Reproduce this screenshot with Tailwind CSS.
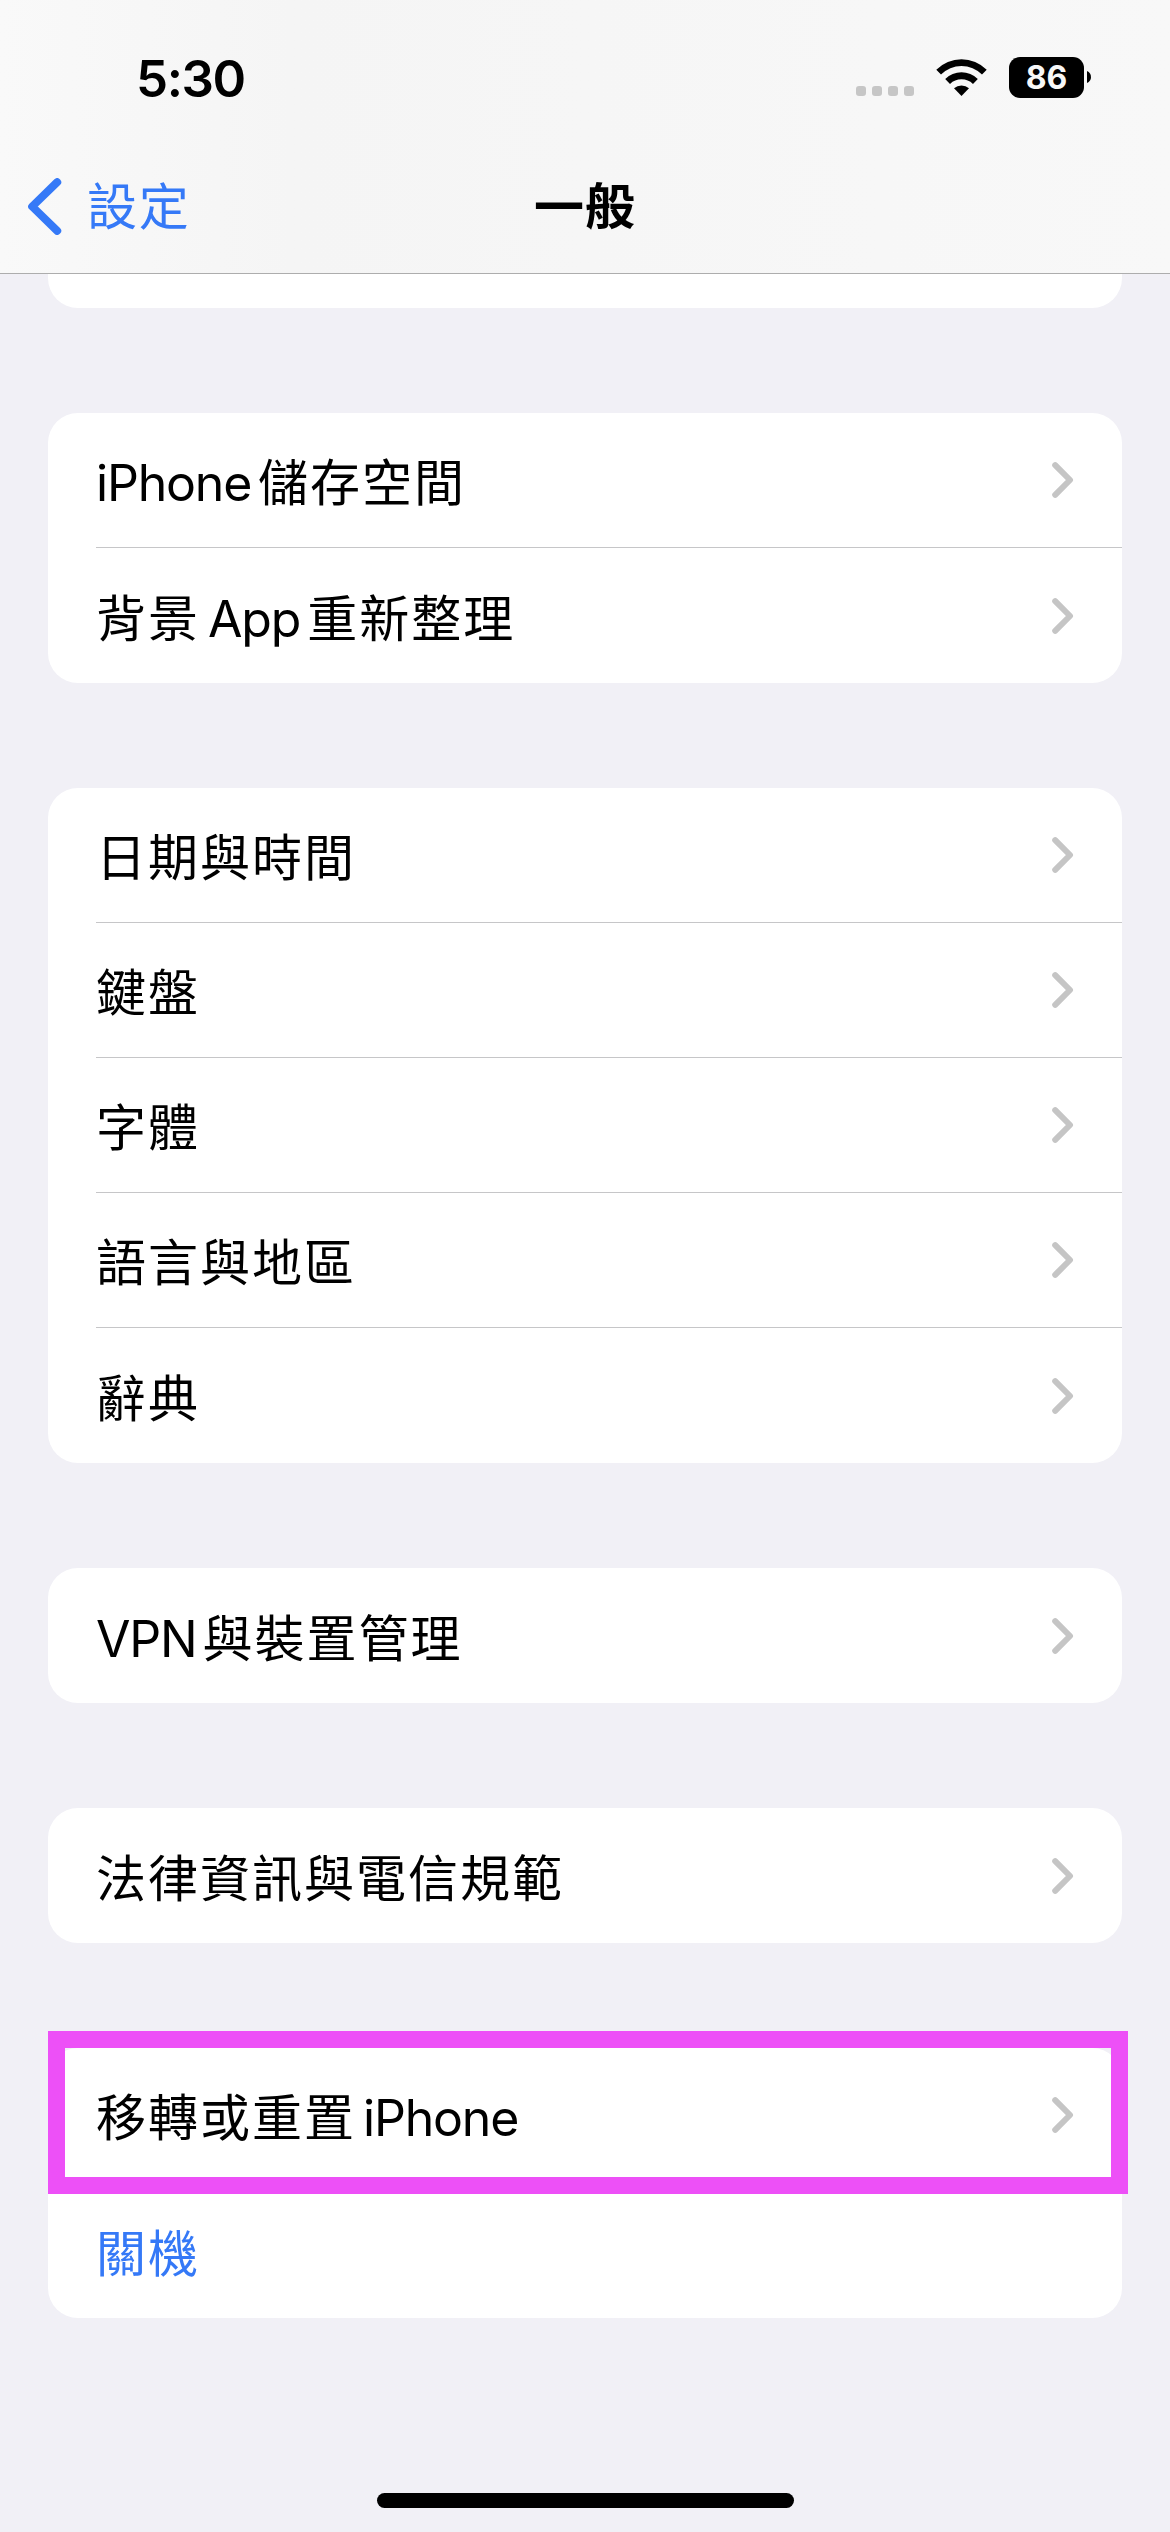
<!DOCTYPE html>
<html lang="zh-Hant">
<head>
  <meta charset="UTF-8" />
  <meta name="viewport" content="width=device-width, initial-scale=1" />
  <title>一般</title>
  <script src="https://cdn.jsdelivr.net/npm/@tailwindcss/browser@4"></script>
</head>
<body class="bg-[#f1f0f6] text-black w-[1170px] h-[2532px] overflow-hidden flex flex-col font-['Inter','Noto_Sans_CJK_TC',sans-serif]">

<!-- ICONS -->
<svg class="hidden">
  <symbol id="chevron" viewBox="0 0 22 36">
    <path d="M3.2 3.2 18 18 3.2 32.8" fill="none" stroke="#c5c5c5" stroke-width="6" stroke-linecap="round" stroke-linejoin="round"/>
  </symbol>
</svg>

<!-- HEADER -->
<header class="h-[274px] shrink-0 border-b border-[#adadad] bg-linear-to-r from-[#f9f9f9] via-[#f5f5f5] via-25% to-[#f8f8f8] flex flex-col">

  <!-- STATUS BAR -->
  <div class="h-[156px] flex items-start justify-between pl-[136px] pr-[79px]">
    <span class="mt-[48px] text-[51px] leading-[62px] font-semibold tracking-[-1.4px]">5:30</span>
    <div class="mt-[57px] flex items-start">
      <div class="mt-[29px] flex gap-[6px]">
        <i class="size-[10px] rounded-[3px] bg-[#c6c6c6]"></i>
        <i class="size-[10px] rounded-[3px] bg-[#c6c6c6]"></i>
        <i class="size-[10px] rounded-[3px] bg-[#c6c6c6]"></i>
        <i class="size-[10px] rounded-[3px] bg-[#c6c6c6]"></i>
      </div>
      <svg class="ml-[22px] mt-[2px] w-[51px] h-[37px]" viewBox="0 0 51 37">
        <path d="M0.3 10.8A35.5 35.5 0 0 1 50.7 10.8L46 15.6A29 29 0 0 0 5 15.6Z"/>
        <path d="M9.2 20A23.2 23.2 0 0 1 41.8 20L37 24.9A16.6 16.6 0 0 0 14 24.9Z"/>
        <path d="M18 29.2A11.5 11.5 0 0 1 33 29.2L25.5 37Z"/>
      </svg>
      <div class="ml-[22px] w-[75px] h-[41px] rounded-[11px] bg-black text-[#f7f7f7] flex items-center justify-center text-[32px] leading-[41px] font-bold">86</div>
      <svg class="ml-[3px] mt-[14px] w-[4px] h-[12px]" viewBox="0 0 4 12"><path d="M0 0C5.3 1.8 5.3 10.2 0 12Z"/></svg>
    </div>
  </div>

  <!-- NAV BAR -->
  <nav class="flex-1 grid grid-cols-3">
    <a class="flex items-start pl-[28px] text-[#3579f7]">
      <svg class="mt-[22px] w-[34px] h-[57px]" viewBox="0 0 34 57">
        <path d="M29.2 4.2 4.2 28.5 29.2 52.8" fill="none" stroke="currentColor" stroke-width="8" stroke-linecap="round" stroke-linejoin="round"/>
      </svg>
      <span class="ml-[25px] mt-[15px] text-[50px] leading-[72px] tracking-[1.7px]">設定</span>
    </a>
    <h1 class="mt-[15px] text-center text-[50px] leading-[72px] font-bold tracking-[1px]">一般</h1>
  </nav>
</header>

<!-- SETTINGS LIST -->
<main class="flex-1 px-[48px] flex flex-col gap-[105px] text-[50px] leading-[72px] tracking-[2px]">

  <section class="h-[34px] shrink-0 bg-white rounded-b-[30px]"></section>

  <section class="bg-white rounded-[30px] pl-[48px]">
    <div class="h-[135px] border-b border-[#c6c6c8] flex items-center justify-between pr-[48px]">
      <span class="pt-[6px]"><span class="tracking-[-1.2px] mr-[7px]">iPhone</span>儲存空間</span>
      <svg class="w-[22px] h-[36px]"><use href="#chevron"/></svg>
    </div>
    <div class="h-[135px] flex items-center justify-between pr-[48px]">
      <span class="pt-[6px]">背景<span class="tracking-[-1.2px] ml-[8px] mr-[7px]">App</span>重新整理</span>
      <svg class="w-[22px] h-[36px]"><use href="#chevron"/></svg>
    </div>
  </section>

  <section class="bg-white rounded-[30px] pl-[48px]">
    <div class="h-[135px] border-b border-[#c6c6c8] flex items-center justify-between pr-[48px]">
      <span class="pt-[6px]">日期與時間</span>
      <svg class="w-[22px] h-[36px]"><use href="#chevron"/></svg>
    </div>
    <div class="h-[135px] border-b border-[#c6c6c8] flex items-center justify-between pr-[48px]">
      <span class="pt-[6px]">鍵盤</span>
      <svg class="w-[22px] h-[36px]"><use href="#chevron"/></svg>
    </div>
    <div class="h-[135px] border-b border-[#c6c6c8] flex items-center justify-between pr-[48px]">
      <span class="pt-[6px]">字體</span>
      <svg class="w-[22px] h-[36px]"><use href="#chevron"/></svg>
    </div>
    <div class="h-[135px] border-b border-[#c6c6c8] flex items-center justify-between pr-[48px]">
      <span class="pt-[6px]">語言與地區</span>
      <svg class="w-[22px] h-[36px]"><use href="#chevron"/></svg>
    </div>
    <div class="h-[135px] flex items-center justify-between pr-[48px]">
      <span class="pt-[6px]">辭典</span>
      <svg class="w-[22px] h-[36px]"><use href="#chevron"/></svg>
    </div>
  </section>

  <section class="bg-white rounded-[30px] pl-[48px]">
    <div class="h-[135px] flex items-center justify-between pr-[48px]">
      <span class="pt-[6px]"><span class="tracking-[-1.2px] mr-[6px]">VPN</span>與裝置管理</span>
      <svg class="w-[22px] h-[36px]"><use href="#chevron"/></svg>
    </div>
  </section>

  <section class="bg-white rounded-[30px] pl-[48px]">
    <div class="h-[135px] flex items-center justify-between pr-[48px]">
      <span class="pt-[6px]">法律資訊與電信規範</span>
      <svg class="w-[22px] h-[36px]"><use href="#chevron"/></svg>
    </div>
  </section>

  <section class="relative bg-white rounded-[30px] pl-[48px]">
    <div class="h-[135px] border-b border-[#c6c6c8] flex items-center justify-between pr-[48px]">
      <span class="pt-[6px]">移轉或重置<span class="tracking-[-1.2px] ml-[7px]">iPhone</span></span>
      <svg class="w-[22px] h-[36px]"><use href="#chevron"/></svg>
    </div>
    <div class="h-[135px] flex items-center text-[#3579f7]">
      <span class="pt-[6px]">關機</span>
    </div>
    <!-- highlight frame over the reset row -->
    <div class="absolute left-0 top-[-17px] w-[1080px] h-[163px] border-[17px] border-[#ed50f7]"></div>
  </section>

</main>

<!-- HOME INDICATOR -->
<footer class="h-[39px] shrink-0 flex justify-center items-start">
  <div class="w-[417px] h-[15px] rounded-full bg-black"></div>
</footer>

</body>
</html>
